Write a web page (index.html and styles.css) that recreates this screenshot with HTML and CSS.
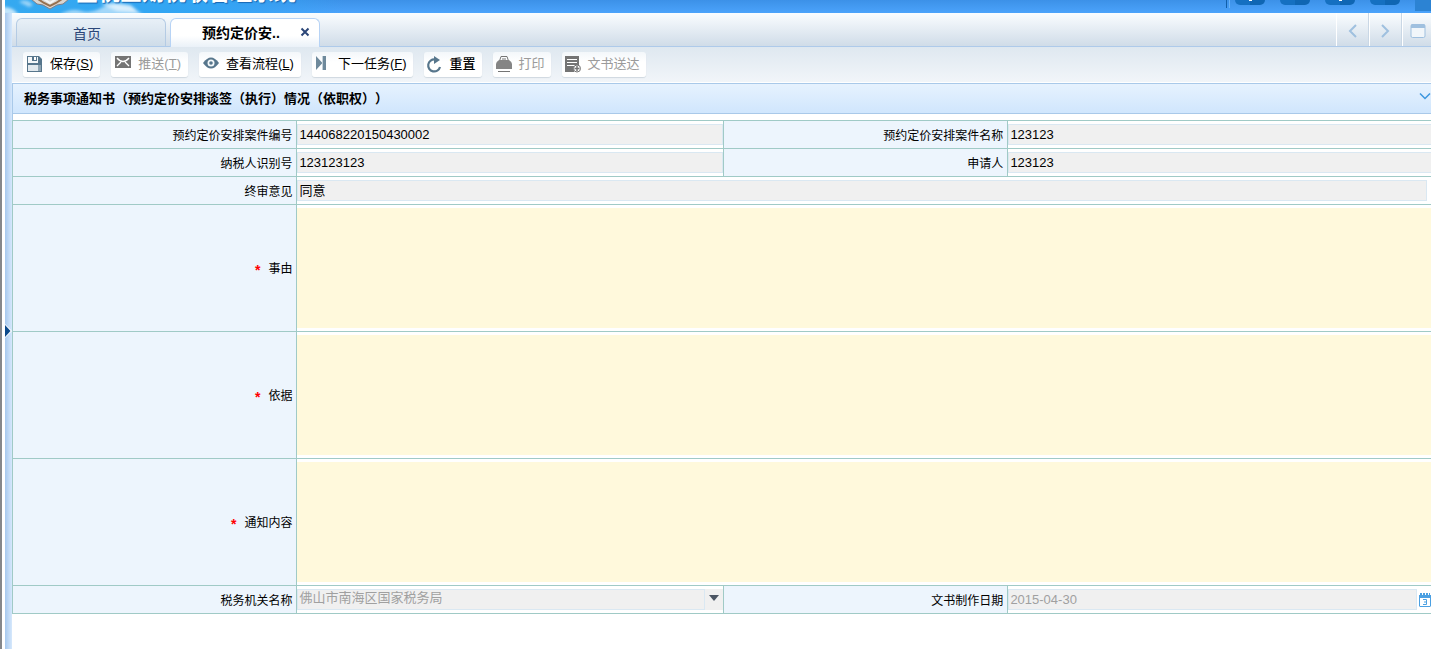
FILE: index.html
```html
<!DOCTYPE html>
<html lang="zh-CN">
<head>
<meta charset="utf-8">
<title>税务事项通知书</title>
<link rel="stylesheet" href="styles.css">
</head>
<body>
<div class="frame">
  <header class="banner">
    <svg class="banner-sky" viewBox="0 0 340 13" aria-hidden="true">
      <defs>
        <filter id="soft" x="-20%" y="-50%" width="140%" height="200%"><feGaussianBlur stdDeviation="1.500"/></filter>
      </defs>
      <g filter="url(#soft)" fill="#fff">
        <path d="M-4 15L-4 8Q4 6 9 10L14 15Z" opacity=".7"/>
        <path d="M14 2Q22 -2 28 5L24 7Z" opacity=".5"/>
        <path d="M54 15Q66 8 76 11T98 7L110 4 128 7 138 15Z" opacity=".55"/>
        <path d="M96 4Q106 1 126 5L132 12 112 11Z" opacity=".6"/>
      </g>
      <path d="M26 -1L32 4 38 5 45 9 52 5 58 4 64 -1Z" fill="#d9d5d0" stroke="#7d7f88"/>
      <path d="M33 -1L39 3 45 6 51 3 57 -1" fill="none" stroke="#96704f" stroke-width="2"/>
      <path d="M39 -1L45 3 51 -1" fill="none" stroke="#f4f4f4" stroke-width="2"/>
    </svg>
    <h1 class="banner-title">金税三期税收管理系统</h1>
    <nav class="banner-tools" aria-label="系统工具">
      <button type="button" class="pill" aria-label="首页"><i class="pill-mark"></i></button>
      <button type="button" class="pill" aria-label="消息"></button>
      <button type="button" class="pill" aria-label="帮助"><i class="pill-mark"></i></button>
      <button type="button" class="pill" aria-label="退出"></button>
      <button type="button" class="banner-corner" aria-label="收起"></button>
    </nav>
  </header>

  <div class="body">
    <aside class="splitter">
      <button type="button" class="splitter-handle" aria-label="展开侧栏">
        <svg viewBox="0 0 7 14" width="7" height="14"><path d="M0 0L7 7 0 14Z" fill="#fff"/><path d="M0 1L5.500 7 0 13Z" fill="#0c4a8c"/></svg>
      </button>
    </aside>

    <main class="main">
      <div class="tabs">
        <button type="button" class="tab">首页</button>
        <div class="tab tab-active">
          <span>预约定价安..</span>
          <button type="button" class="tab-close" aria-label="关闭">
            <svg viewBox="0 0 10 10" width="10" height="10"><path d="M1.500 1.500L8.500 8.500M8.500 1.500L1.500 8.500" stroke="#2b4678" stroke-width="2" fill="none"/></svg>
          </button>
        </div>
        <div class="tab-nav">
          <button type="button" aria-label="向左"><svg viewBox="0 0 14 14" width="14" height="14"><path d="M10 1L4 7 10 13" fill="none" stroke="#9fc0df" stroke-width="2"/></svg></button>
          <button type="button" aria-label="向右"><svg viewBox="0 0 14 14" width="14" height="14"><path d="M3 1L9 7 3 13" fill="none" stroke="#9fc0df" stroke-width="2"/></svg></button>
          <button type="button" aria-label="最大化"><svg viewBox="0 0 16 14" width="16" height="14"><rect x="1" y=".5" width="14" height="13" rx="1.500" fill="#f1f6fa" stroke="#9fc0df"/><path d="M2 0H14L15 1V4H1V1Z" fill="#9fc0df"/></svg></button>
        </div>
      </div>

      <div class="toolbar">
        <button type="button" class="tool">
          <svg viewBox="0 0 17 17" width="17" height="17"><path fill="#57768c" d="M1 0H13L16 3V16H1Z"/><path fill="#f4f7f9" d="M2 1H12V7H2Z"/><path fill="#57768c" d="M6 0H11V5H6Z"/><path fill="#fff" d="M8 1H10V4H8Z"/><path fill="#e2e9ee" d="M2 9H15V15H2Z"/><path fill="#8fa5b4" d="M12 9H15V15H12Z"/></svg>
          <span>保存(<u>S</u>)</span>
        </button>
        <button type="button" class="tool" disabled>
          <svg viewBox="0 0 17 17" width="17" height="17"><path fill="#747474" d="M1 0H17V12H1Z"/><path d="M3 2Q9 9 15 2M3 10L7 6M15 10L11 6" fill="none" stroke="#fff" stroke-width="1.300"/></svg>
          <span>推送(<u>T</u>)</span>
        </button>
        <button type="button" class="tool">
          <svg viewBox="0 0 17 17" width="17" height="17"><path fill="#57768c" d="M1 7Q9 -4 17 7Q9 18 1 7Z"/><circle cx="9" cy="7" r="3.500" fill="#f4f8fa"/><circle cx="9" cy="7" r="1.800" fill="#57768c"/></svg>
          <span>查看流程(<u>L</u>)</span>
        </button>
        <button type="button" class="tool tool-tight">
          <svg viewBox="0 0 17 17" width="17" height="17"><path fill="#6f8a9c" d="M2 0L8 6.500V0H12V14H8V7.500L2 14Z"/><path stroke="#c3d0d9" d="M8.500 0V14"/></svg>
          <span>下一任务(<u>F</u>)</span>
        </button>
        <button type="button" class="tool tool-tight">
          <svg viewBox="0 0 17 17" width="17" height="17"><path fill="none" stroke="#57768c" stroke-width="2.200" d="M9 3.500A6 6 0 1 0 14 11"/><path fill="#57768c" d="M8 0L14 4 8 8Z"/></svg>
          <span class="strong">重置</span>
        </button>
        <button type="button" class="tool tool-tight" disabled>
          <svg viewBox="0 0 17 17" width="17" height="17"><path fill="none" stroke="#747474" d="M4.500 5L6 .5H12L13.500 5M7 3H11"/><path fill="#858585" d="M1 8Q1 6 4 4H14Q17 6 17 8V13H1Z"/><path fill="#747474" d="M3 15H15V16H3Z"/></svg>
          <span>打印</span>
        </button>
        <button type="button" class="tool tool-tight" disabled>
          <svg viewBox="0 0 17 17" width="17" height="17"><path fill="#747474" d="M1 0H15V12H10V16H1Z"/><path stroke="#fff" d="M3 3.500H13M3 6.500H13M3 9.500H11"/><circle cx="13" cy="12.500" r="3.500" fill="#fff" stroke="#747474"/><path stroke="#747474" stroke-width="1.500" d="M13 10V15M10.500 12.500H15.500"/></svg>
          <span>文书送达</span>
        </button>
      </div>

      <div class="panel-head">
        <h2>税务事项通知书（预约定价安排谈签（执行）情况（依职权））</h2>
        <button type="button" class="panel-toggle" aria-label="折叠"><svg viewBox="0 0 12 7" width="12" height="7"><path d="M1 .5L6 5.500 11 .5" fill="none" stroke="#3c97de" stroke-width="1.500"/></svg></button>
      </div>

      <form class="form">
        <table class="grid">
          <colgroup><col class="col-label"><col class="col-value"><col class="col-label"><col class="col-value"></colgroup>
          <tbody>
            <tr>
              <th scope="row"><label for="case-no">预约定价安排案件编号</label></th>
              <td><input class="field" id="case-no" type="text" value="144068220150430002" readonly></td>
              <th scope="row"><label for="case-name">预约定价安排案件名称</label></th>
              <td><input class="field" id="case-name" type="text" value="123123" readonly></td>
            </tr>
            <tr>
              <th scope="row"><label for="taxpayer">纳税人识别号</label></th>
              <td><input class="field" id="taxpayer" type="text" value="123123123" readonly></td>
              <th scope="row"><label for="applicant">申请人</label></th>
              <td><input class="field" id="applicant" type="text" value="123123" readonly></td>
            </tr>
            <tr>
              <th scope="row"><label for="opinion">终审意见</label></th>
              <td colspan="3" class="cell-inset"><input class="field field-cjk" id="opinion" type="text" value="同意" readonly></td>
            </tr>
            <tr>
              <th scope="row"><label for="reason"><b class="req">*</b>事由</label></th>
              <td colspan="3"><textarea class="area" id="reason"></textarea></td>
            </tr>
            <tr>
              <th scope="row"><label for="basis"><b class="req">*</b>依据</label></th>
              <td colspan="3"><textarea class="area" id="basis"></textarea></td>
            </tr>
            <tr>
              <th scope="row"><label for="notice"><b class="req">*</b>通知内容</label></th>
              <td colspan="3"><textarea class="area" id="notice"></textarea></td>
            </tr>
            <tr>
              <th scope="row"><label for="office">税务机关名称</label></th>
              <td>
                <div class="combo">
                  <select class="field field-cjk" id="office" disabled><option>佛山市南海区国家税务局</option></select>
                  <svg class="combo-arrow" viewBox="0 0 10 6" width="10" height="6" aria-hidden="true"><path d="M0 0H10L5 6Z" fill="#4b5563"/></svg>
                </div>
              </td>
              <th scope="row"><label for="made">文书制作日期</label></th>
              <td>
                <div class="date">
                  <input class="field" id="made" type="text" value="2015-04-30" disabled>
                  <button type="button" class="date-pick" aria-label="选择日期"><svg viewBox="0 0 12 14" width="12" height="14"><path fill="#4ba0e2" d="M0 2H12V13L11 14H1L0 13Z"/><path fill="#4ba0e2" d="M1 0H3V2H1ZM4 0H6V2H4ZM7 0H9V2H7ZM10 0H11V2H10Z"/><path fill="#fff" d="M1 5H11V13H1Z"/><path fill="none" stroke="#4ba0e2" d="M4 6.500H7.500V11.500H4M5 9H7.500"/></svg></button>
                </div>
              </td>
            </tr>
          </tbody>
        </table>
      </form>
    </main>
  </div>
</div>
</body>
</html>
```
FILE: styles.css
```css
* { box-sizing: border-box; }

body {
  margin: 0;
  background: #fff;
  color: #000;
  font: 13px/18px "Liberation Sans", "Noto Sans CJK SC", sans-serif;
  overflow: hidden;
}

button {
  margin: 0;
  padding: 0;
  border: 0;
  background: none;
  font: inherit;
  color: inherit;
}

svg { display: block; flex: none; }

.frame {
  display: flex;
  flex-direction: column;
  min-height: 100vh;
  padding-left: 3px;
  border-left: 2px solid #85878b;
}

/* banner */
.banner {
  position: relative;
  display: flex;
  justify-content: space-between;
  align-items: flex-end;
  height: 13px;
  overflow: hidden;
  background: linear-gradient(#3c91e8, #4ba3fb);
}

.banner-sky {
  position: absolute;
  left: 0;
  top: 0;
  width: 340px;
  height: 13px;
  background: linear-gradient(90deg, #35a9f0, #32a5f4 60%, transparent);
}

.banner-title {
  position: relative;
  margin: 0 0 10px 71px;
  color: #fff;
  font: bold 22px/26px "Noto Sans CJK SC", sans-serif;
  text-shadow: 1px 1px 1px #1767b3;
}

.banner-tools {
  display: flex;
  gap: 15px;
  height: 13px;
}

.banner-tools::before {
  content: "";
  width: 2px;
  height: 8px;
  margin-right: -10px;
  border-left: 1px solid #115fa9;
  border-right: 1px solid #6ab4f7;
}

.pill {
  display: flex;
  justify-content: center;
  width: 30px;
  height: 5px;
  border-radius: 0 0 7px 7px;
  background: linear-gradient(90deg, #1570c1 50%, #0f66b3 50%);
}

.pill-mark {
  width: 3px;
  height: 1px;
  background: #fff;
}

.banner-corner {
  width: 16px;
  height: 11px;
  background: #2c83d3;
}

/* page body */
.body {
  display: flex;
  flex: 1;
}

.splitter {
  display: flex;
  align-items: center;
  width: 7px;
  background: linear-gradient(90deg, #a6c8ee, #d6e8fc);
}

.splitter-handle { line-height: 0; }

.main {
  flex: 1;
  min-width: 0;
  overflow: hidden;
}

/* tabs */
.tabs {
  display: flex;
  align-items: flex-end;
  gap: 4px;
  height: 34px;
  padding-left: 4px;
  border-bottom: 1px solid #aecaea;
  background: linear-gradient(#fafdff, #d0dce8);
}

.tab {
  display: flex;
  align-items: center;
  justify-content: center;
  width: 150px;
  height: 28px;
  padding: 2px 8px 0 0;
  border: 1px solid #b4cbe4;
  border-bottom: 0;
  border-radius: 6px 6px 0 0;
  background: linear-gradient(#e8f0f7, #cedce9);
  color: #2b4678;
  font-size: 14px;
}

.tab-active {
  position: relative;
  height: 29px;
  margin-bottom: -1px;
  padding-top: 0;
  border-color: #b7d3f5;
  background: linear-gradient(#fff 60%, #eaf1f8);
  color: #000;
  font-weight: bold;
}

.tab-close {
  position: absolute;
  right: 9px;
  top: 8px;
}

.tab-nav {
  display: flex;
  height: 33px;
  margin-left: auto;
}

.tab-nav button {
  display: flex;
  align-items: center;
  justify-content: center;
  width: 33px;
  padding-top: 2px;
  border-left: 1px solid #fff;
  border-right: 1px solid #c9d7e5;
}

.tab-nav button:last-child {
  width: 29px;
  padding-left: 2px;
  border-right: 0;
}

/* toolbar */
.toolbar {
  display: flex;
  align-items: center;
  gap: 11px;
  height: 36px;
  padding: 0 11px;
  border-bottom: 1px solid #fff;
  background: linear-gradient(#dfe8f0, #f1f5f9);
}

.tool {
  display: flex;
  align-items: center;
  gap: 7px;
  height: 25px;
  padding: 0 7px 1px 3px;
  border-radius: 3px;
  background: linear-gradient(#f3f7fa, #fff 40%);
  box-shadow: 0 1px 1px #cfd8df;
  white-space: nowrap;
}

.tool:disabled { color: #9b9b9b; }
.tool-tight { padding: 0 6px 1px 2px; }
.strong { font-weight: 500; }

/* panel title */
.panel-head {
  display: flex;
  align-items: center;
  justify-content: space-between;
  height: 31px;
  padding-left: 11px;
  border: solid #a9c9e9;
  border-width: 1px 0 1px 1px;
  background: linear-gradient(#e6f2fe, #d0e6fd);
}

.panel-head h2 {
  margin: 0;
  font-size: 13px;
  text-spacing-trim: space-all;
}

.panel-toggle { padding-bottom: 4px; }

/* form */
.form {
  padding-top: 6px;
  border-left: 1px solid #a9c9e9;
}

.grid {
  width: calc(100% + 5px);
  margin-left: -1px;
  border-collapse: collapse;
  table-layout: fixed;
}

.col-label { width: 20%; }
.col-value { width: 30%; }

.grid th,
.grid td {
  height: 28px;
  padding: 3px 0;
  border: 1px solid #a0cac6;
}

.grid th {
  padding-right: 4px;
  padding-top: 4px;
  padding-bottom: 2px;
  background: #edf5fd;
  font-size: 12px;
  font-weight: normal;
  text-align: right;
}

.grid .cell-inset { padding-right: 7px; }

.req {
  margin-right: 8px;
  color: #f00;
  font-size: 14px;
  vertical-align: -2px;
  line-height: 12px;
}

.field {
  display: block;
  width: 100%;
  height: 21px;
  margin: 0;
  padding: 0 1px;
  border: 1px solid #dae8f2;
  border-radius: 0;
  background: #f0f0f0;
  color: #000;
  font: inherit;
  appearance: none;
}

.field-cjk { padding-bottom: 3px; line-height: 16px; }

.field:disabled {
  color: #a0a0a0;
  opacity: 1;
}

.area {
  display: block;
  width: 100%;
  height: 120px;
  margin: 0;
  padding: 2px;
  border: 0;
  background: #fff9dc;
  font: inherit;
  resize: none;
}

.combo,
.date {
  display: flex;
  align-items: center;
}

.combo { background: #f0f0f0; }
.combo .field, .date .field { flex: 1; min-width: 0; }
.combo-arrow { margin: 0 4px 3px; }
.date-pick { margin: 0 3px 0 2px; }
```
